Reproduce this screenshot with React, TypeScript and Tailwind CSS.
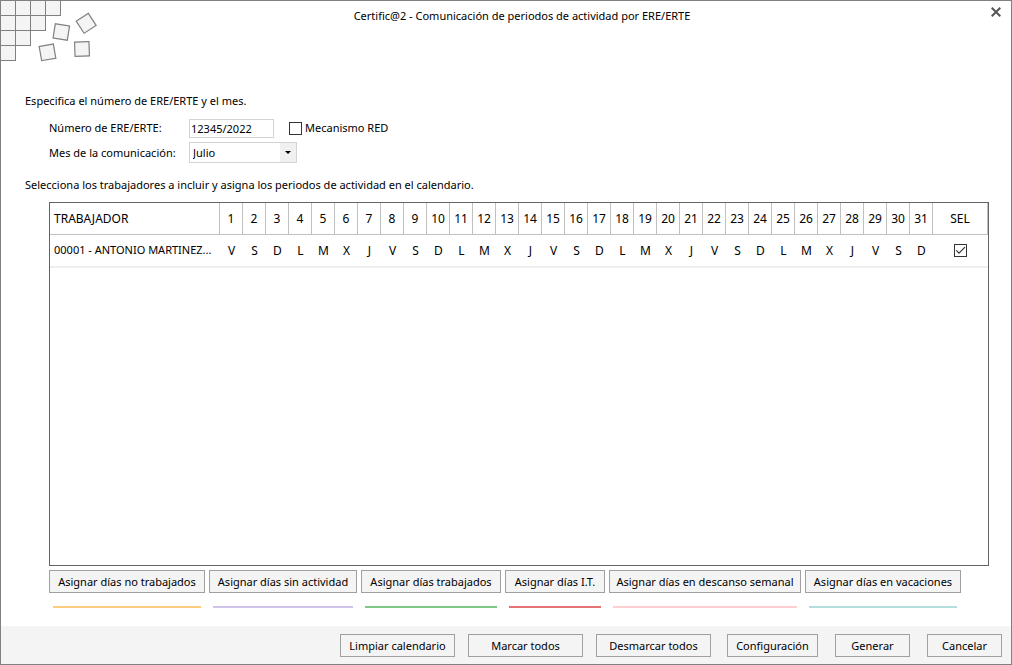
import { useState } from "react";

const WEEKDAYS = ["V", "S", "D", "L", "M", "X", "J"];
const DAYS = Array.from({ length: 31 }, (_, i) => i + 1);

const MONTHS = [
  "Enero",
  "Febrero",
  "Marzo",
  "Abril",
  "Mayo",
  "Junio",
  "Julio",
  "Agosto",
  "Septiembre",
  "Octubre",
  "Noviembre",
  "Diciembre",
];

const ASSIGN_ACTIONS = [
  { label: "Asignar días no trabajados", width: "w-[156px]", bar: "bg-[#ffcc80]" },
  { label: "Asignar días sin actividad", width: "w-[148px]", bar: "bg-[#d1c4e9]" },
  { label: "Asignar días trabajados", width: "w-[140px]", bar: "bg-[#81c784]" },
  { label: "Asignar días I.T.", width: "w-[100px]", bar: "bg-[#e57373]" },
  { label: "Asignar días en descanso semanal", width: "w-[192px]", bar: "bg-[#ffcdd2]" },
  { label: "Asignar días en vacaciones", width: "w-[156px]", bar: "bg-[#b2dfdb]" },
];

const BUTTON =
  "h-[23px] shrink-0 whitespace-nowrap border border-[#a0a0a0] bg-[#f4f4f4] text-center leading-4";

function Logo() {
  return (
    <svg
      className="block h-[66px] w-[100px]"
      viewBox="0 0 100 66"
      fill="#f4f4f4"
      stroke="#808080"
      aria-hidden="true"
    >
      <path d="M-.5-.5h60v15h-15v15h-15v15h-15v15h-15z" shapeRendering="crispEdges" />
      <path d="M14.500-.5v45M29.500-.5v30M44.500-.5v15M-.5 14.500h45M-.5 29.500h30M-.5 44.500h15" fill="none" shapeRendering="crispEdges" />
      <g strokeWidth="1.200">
        <rect x="-7.200" y="-7.200" width="14.400" height="14.400" transform="translate(60.300 31) rotate(9)" />
        <rect x="-7.200" y="-7.200" width="14.400" height="14.400" transform="translate(85.200 22.300) rotate(-33)" />
        <rect x="-7.200" y="-7.200" width="14.400" height="14.400" transform="translate(46.500 51.300) rotate(-10)" />
        <rect x="-7.200" y="-7.200" width="14.400" height="14.400" transform="translate(81 48) rotate(-2)" />
      </g>
    </svg>
  );
}

function CheckBox({
  id,
  checked,
  label,
  onChange,
}: {
  id: string;
  checked: boolean;
  label?: string;
  onChange: (value: boolean) => void;
}) {
  return (
    <span className="grid size-[13px] shrink-0">
      <input
        id={id}
        type="checkbox"
        aria-label={label}
        checked={checked}
        onChange={(e) => onChange(e.target.checked)}
        className="col-start-1 row-start-1 size-[13px] appearance-none border border-[#333333] bg-white"
      />
      {checked && (
        <svg
          className="pointer-events-none col-start-1 row-start-1 size-[13px]"
          viewBox="0 0 13 13"
          fill="none"
          stroke="#333333"
          strokeWidth="1.200"
          aria-hidden="true"
        >
          <path d="M2.300 6.300 5 9.200 11 3.200" />
        </svg>
      )}
    </span>
  );
}

export default function App() {
  const [number, setNumber] = useState("12345/2022");
  const [month, setMonth] = useState("Julio");
  const [red, setRed] = useState(false);
  const [selected, setSelected] = useState(true);

  return (
    <main className="flex min-h-screen flex-col border border-[#808080] bg-white font-['Noto_Sans',sans-serif] text-[11px] leading-4 text-black">
      <header className="grid grid-cols-[100px_1fr_100px] items-start">
        <Logo />
        <h1 className="pt-[7px] pl-8 text-center">
          Certific@2 - Comunicación de periodos de actividad por ERE/ERTE
        </h1>
        <button type="button" aria-label="Cerrar" className="mt-1 mr-2 justify-self-end p-0.5">
          <svg className="block size-[10px]" viewBox="0 0 10 10" stroke="#555555" strokeWidth="2" aria-hidden="true">
            <path d="M.7.700 9.300 9.300M9.300.700.700 9.300" />
          </svg>
        </button>
      </header>

      <section className="flex grow flex-col pt-[26px] pr-[22px] pl-6">
        <p>Especifica el número de ERE/ERTE y el mes.</p>

        <div className="mt-[9px] ml-6 grid grid-cols-[140px_1fr] items-center gap-y-1">
          <label htmlFor="ere">Número de ERE/ERTE:</label>
          <div className="flex items-center">
            <input
              id="ere"
              value={number}
              onChange={(e) => setNumber(e.target.value)}
              className="h-[19px] w-[85px] border border-[#d3d3d3] px-px"
            />
            <div className="ml-[15px] flex h-5 items-center gap-[3px]">
              <CheckBox id="red" checked={red} onChange={setRed} />
              <label htmlFor="red">Mecanismo RED</label>
            </div>
          </div>
          <label htmlFor="mes">Mes de la comunicación:</label>
          <div className="grid w-[108px]">
            <select
              id="mes"
              value={month}
              onChange={(e) => setMonth(e.target.value)}
              className="col-start-1 row-start-1 h-[21px] appearance-none border border-[#d3d3d3] bg-white px-[3px]"
            >
              {MONTHS.map((m) => (
                <option key={m}>{m}</option>
              ))}
            </select>
            <span className="pointer-events-none col-start-1 row-start-1 m-px flex w-4 items-center justify-center justify-self-end bg-[#f0f0f0]">
              <svg className="h-[3px] w-[6px]" viewBox="0 0 6 3" aria-hidden="true">
                <path d="M0 0h6L3 3z" />
              </svg>
            </span>
          </div>
        </div>

        <p className="mt-[14px]">
          Selecciona los trabajadores a incluir y asigna los periodos de actividad en el calendario.
        </p>

        <div className="mt-[9px] ml-6 grow border border-[#646464]">
          <table className="w-full table-fixed border-separate border-spacing-0 text-xs">
            <colgroup>
              <col />
              {DAYS.map((d) => (
                <col key={d} className="w-[23px]" />
              ))}
              <col className="w-[55px]" />
            </colgroup>
            <thead>
              <tr className="h-8">
                <th className="border-r border-b border-[#c0c0c0] px-1 text-left font-normal">TRABAJADOR</th>
                {DAYS.map((d) => (
                  <th key={d} className="border-r border-b border-[#c0c0c0] p-0 text-center font-normal">
                    {d}
                  </th>
                ))}
                <th className="border-r border-b border-[#c0c0c0] p-0 text-center font-normal">SEL</th>
              </tr>
            </thead>
            <tbody>
              <tr className="h-[33px]">
                <td className="border-b-2 border-[#eeeeee] px-1 text-[11px] whitespace-nowrap">
                  00001 - ANTONIO MARTINEZ...
                </td>
                {DAYS.map((d) => (
                  <td key={d} className="border-b-2 border-[#eeeeee] p-0 text-center">
                    {WEEKDAYS[(d - 1) % 7]}
                  </td>
                ))}
                <td className="border-b-2 border-[#eeeeee] p-0">
                  <div className="flex justify-center">
                    <CheckBox
                      id="sel-00001"
                      label="Seleccionar trabajador 00001"
                      checked={selected}
                      onChange={setSelected}
                    />
                  </div>
                </td>
              </tr>
            </tbody>
          </table>
        </div>

        <div className="mt-1 mb-[18px] ml-6 flex gap-1">
          {ASSIGN_ACTIONS.map((action) => (
            <div key={action.label} className="flex shrink-0 flex-col">
              <button type="button" className={`${BUTTON} ${action.width}`}>
                {action.label}
              </button>
              <span className={`mx-1 mt-[13px] h-0.5 ${action.bar}`} />
            </div>
          ))}
        </div>
      </section>

      <footer className="flex justify-end bg-[#f4f4f4] pt-2 pr-[9px] pb-[7px]">
        <div className="flex gap-[13px]">
          <button type="button" className={`${BUTTON} w-[115px]`}>Limpiar calendario</button>
          <button type="button" className={`${BUTTON} w-[115px]`}>Marcar todos</button>
          <button type="button" className={`${BUTTON} w-[115px]`}>Desmarcar todos</button>
        </div>
        <div className="ml-4 flex gap-[17px]">
          <button type="button" className={`${BUTTON} w-[91px]`}>Configuración</button>
          <button type="button" className={`${BUTTON} w-[75px]`}>Generar</button>
          <button type="button" className={`${BUTTON} w-[75px]`}>Cancelar</button>
        </div>
      </footer>
    </main>
  );
}
